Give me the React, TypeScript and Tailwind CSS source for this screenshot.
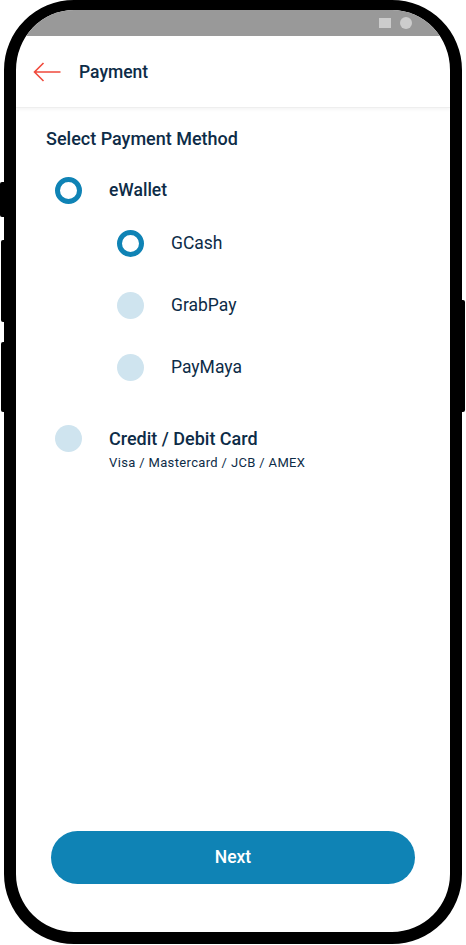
import React, { useState } from 'react';

const Radio = ({ checked }: { checked: boolean }) =>
  checked ? (
    <span className="block w-[27px] h-[27px] shrink-0 rounded-full border-[5px] border-[#0f83b5] bg-white" />
  ) : (
    <span className="block w-[27px] h-[27px] shrink-0 rounded-full bg-[#cfe4ef]" />
  );

const wallets = ['GCash', 'GrabPay', 'PayMaya'];

const App: React.FC = () => {
  const [method, setMethod] = useState('ewallet');
  const [wallet, setWallet] = useState('GCash');

  return (
    <div className="relative w-[466px] h-[945px] bg-white" style={{ fontFamily: 'Roboto, "Liberation Sans", sans-serif' }}>
      {/* side buttons */}
      <div className="absolute left-0 top-[182px] w-[8px] h-[35px] bg-black rounded-l-[2px]" />
      <div className="absolute left-[1px] top-[240px] w-[8px] h-[82px] bg-black rounded-l-[2px]" />
      <div className="absolute left-[1px] top-[342px] w-[8px] h-[70px] bg-black rounded-l-[2px]" />
      <div className="absolute left-[456px] top-[300px] w-[9px] h-[112px] bg-black rounded-r-[2px]" />

      {/* phone frame */}
      <div className="relative ml-[4px] w-[458px] h-[944px] border-[12px] border-t-[10px] border-black rounded-[70px] overflow-hidden bg-white flex flex-col">
        <div className="h-[26px] shrink-0 bg-[#999999] flex items-center justify-end gap-[9px] pr-[38px]">
          <span className="block w-[12px] h-[10px] bg-[#cccccc]" />
          <span className="block w-[12px] h-[12px] rounded-full bg-[#cccccc]" />
        </div>

        <div className="h-[72px] shrink-0 flex items-center border-b border-[#eeeeee] shadow-[0_2px_3px_rgba(0,0,0,0.04)]">
          <button className="ml-[17px] w-[28px] h-[20px] flex items-center">
            <svg width="28" height="20" viewBox="0 0 28 20" fill="none">
              <path d="M27.5 10H1.5M10.5 1L1.5 10L10.5 19" stroke="#f04a3c" strokeWidth="1.6" />
            </svg>
          </button>
          <h1 className="ml-[18px] pt-[2px] text-[17.5px] font-medium text-[#0d2c47]">Payment</h1>
        </div>

        <div className="pl-[30px] pt-[19px] text-[#0d2c47]">
          <h2 className="text-[18px] leading-[24px] font-medium">Select Payment Method</h2>

          <button onClick={() => setMethod('ewallet')} className="mt-[26px] ml-[9px] h-[27px] flex items-center">
            <Radio checked={method === 'ewallet'} />
            <span className="ml-[27px] text-[17.5px] font-medium">eWallet</span>
          </button>

          <div className="ml-[71px] mt-[26px] flex flex-col gap-[35px]">
            {wallets.map((w) => (
              <button key={w} onClick={() => { setMethod('ewallet'); setWallet(w); }} className="h-[27px] flex items-center">
                <Radio checked={method === 'ewallet' && wallet === w} />
                <span className="ml-[27px] text-[17.5px]">{w}</span>
              </button>
            ))}
          </div>

          <button onClick={() => setMethod('card')} className="mt-[44px] ml-[9px] flex items-start text-left">
            <Radio checked={method === 'card'} />
            <span className="ml-[27px] flex flex-col">
              <span className="text-[18px] leading-[27px] font-medium">Credit / Debit Card</span>
              <span className="text-[13px] leading-[22px] tracking-[0.35px]">Visa / Mastercard / JCB / AMEX</span>
            </span>
          </button>
        </div>

        <div className="flex-1" />

        <div className="px-[35px] pb-[48px]">
          <button className="w-full h-[53px] rounded-full bg-[#0f83b5] text-white text-[17.5px] font-medium">Next</button>
        </div>
      </div>
    </div>
  );
};

export default App;
